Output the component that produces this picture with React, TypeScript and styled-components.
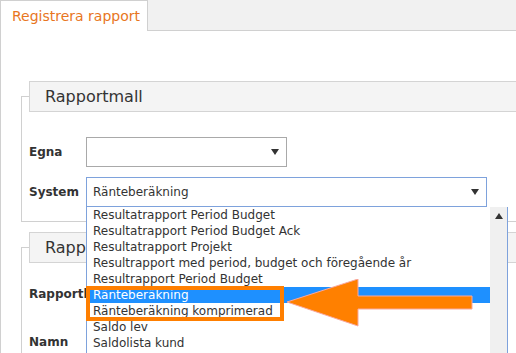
import styled, { createGlobalStyle } from 'styled-components';

const GlobalStyle = createGlobalStyle`
    html, body {
        margin: 0;
        padding: 0;
        background: #fff;
        overflow: hidden;
    }
    body {
        font-family: 'DejaVu Sans', Verdana, sans-serif;
        color: #333;
    }
`;

const reportOptions = [
    'Resultatrapport Period Budget',
    'Resultatrapport Period Budget Ack',
    'Resultatrapport Projekt',
    'Resultrapport med period, budget och föregående år',
    'Resultrapport Period Budget',
    'Ränteberäkning',
    'Ränteberäkning komprimerad',
    'Saldo lev',
    'Saldolista kund',
    'Saldolista lev',
];

const Caret = ({ up }: { up?: boolean }) => (
    <svg width="8" height="6" viewBox="0 0 8 6">
        <path d={up ? 'M0 6 L4 0 L8 6 Z' : 'M0 0 L8 0 L4 6 Z'} fill="#333" />
    </svg>
);

const App = () => {
    return (
        <Page>
            <GlobalStyle />
            <TabBar>
                <Tab>Registrera rapport</Tab>
                <TabFiller />
            </TabBar>
            <Panel>
                <Section>
                    <Legend>Rapportmall</Legend>
                    <FormRow $top={25}>
                        <Label>Egna</Label>
                        <Select $width={201}>
                            <span />
                            <Caret />
                        </Select>
                    </FormRow>
                    <FormRow $top={10}>
                        <Label>System</Label>
                        <SelectWrap>
                            <Select $width={401} $focused>
                                <span>Ränteberäkning</span>
                                <Caret />
                            </Select>
                            <Dropdown>
                                <OptionList>
                                    {reportOptions.map((item, index) => (
                                        <Option key={index} $active={index === 5}>
                                            {item}
                                        </Option>
                                    ))}
                                </OptionList>
                                <ScrollTrack>
                                    <ScrollArrow>
                                        <Caret up />
                                    </ScrollArrow>
                                </ScrollTrack>
                            </Dropdown>
                        </SelectWrap>
                    </FormRow>
                </Section>
                <Section $gapTop={25}>
                    <Legend>Rapportinställningar</Legend>
                    <FormRow $top={16}>
                        <Label>Rapportlayout</Label>
                        <Select $width={401}>
                            <span />
                            <Caret />
                        </Select>
                    </FormRow>
                    <FormRow $top={18}>
                        <Label>Namn</Label>
                        <Select $width={401}>
                            <span />
                        </Select>
                    </FormRow>
                </Section>
            </Panel>
            <HighlightBox />
            <Arrow width="192" height="50" viewBox="0 0 192 50">
                <path
                    d="M1 23 L72 0 L72 17 L186 17 L186 30 L72 30 L72 47 Z"
                    fill="#ff8000"
                    stroke="#f8a8a0"
                    strokeWidth="1"
                />
            </Arrow>
        </Page>
    );
};

export default App;

const Page = styled.div`
    position: relative;
    width: 516px;
    height: 353px;
    overflow: hidden;
`;

const TabBar = styled.div`
    display: flex;
    height: 31px;
    background: #f1f1f1;
`;

const Tab = styled.div`
    width: 148px;
    padding-left: 11px;
    box-sizing: border-box;
    background: #fff;
    border: 1px solid #d0d0d0;
    border-bottom: none;
    font-size: 14px;
    line-height: 31px;
    color: #e8761e;
    white-space: nowrap;
`;

const TabFiller = styled.div`
    flex: 1;
    border-bottom: 1px solid #d0d0d0;
`;

const Panel = styled.div`
    border-left: 1px solid #d0d0d0;
    padding: 65px 0 0 20px;
`;

const Section = styled.div<{ $gapTop?: number }>`
    width: 640px;
    margin-top: ${(p) => p.$gapTop ?? 0}px;
    border: 1px solid #d0d0d0;
    padding: 0 0 14px 7px;
`;

const Legend = styled.div`
    height: 31px;
    margin-top: -16px;
    box-sizing: border-box;
    border: 1px solid #d4d4d4;
    background: #f4f4f4;
    padding-left: 15px;
    font-size: 16px;
    line-height: 29px;
    color: #333;
`;

const FormRow = styled.div<{ $top: number }>`
    display: flex;
    align-items: center;
    height: 30px;
    margin-top: ${(p) => p.$top}px;
`;

const Label = styled.div`
    width: 57px;
    font-size: 12px;
    font-weight: bold;
    color: #333;
    white-space: nowrap;
`;

const SelectWrap = styled.div`
    position: relative;
`;

const Select = styled.div<{ $width: number; $focused?: boolean }>`
    display: flex;
    align-items: center;
    justify-content: space-between;
    width: ${(p) => p.$width}px;
    height: 30px;
    box-sizing: border-box;
    padding: 0 7px 0 6px;
    background: #fff;
    border: 1px solid ${(p) => (p.$focused ? '#7ea2dc' : '#a9a9a9')};
    font-size: 12px;
    color: #333;
`;

const Dropdown = styled.div`
    position: absolute;
    top: 30px;
    left: 0;
    display: flex;
    width: 422px;
    box-sizing: border-box;
    background: #fff;
    border: 1px solid #7ea2dc;
    border-top: none;
    z-index: 2;
`;

const OptionList = styled.ul`
    flex: 1;
    margin: 0;
    padding: 0;
    list-style: none;
`;

const Option = styled.li<{ $active?: boolean }>`
    height: 16px;
    padding-left: 6px;
    font-size: 12px;
    line-height: 16px;
    white-space: nowrap;
    color: ${(p) => (p.$active ? '#fff' : '#333')};
    background: ${(p) => (p.$active ? '#1e90ff' : 'transparent')};
`;

const ScrollTrack = styled.div`
    width: 17px;
    background: #f0f0f0;
`;

const ScrollArrow = styled.div`
    display: flex;
    justify-content: center;
    padding-top: 6px;
`;

const HighlightBox = styled.div`
    position: absolute;
    left: 86px;
    top: 286px;
    width: 198px;
    height: 35px;
    box-sizing: border-box;
    border: 4px solid #ff7f00;
    z-index: 3;
`;

const Arrow = styled.svg`
    position: absolute;
    left: 286px;
    top: 279px;
    z-index: 3;
`;
